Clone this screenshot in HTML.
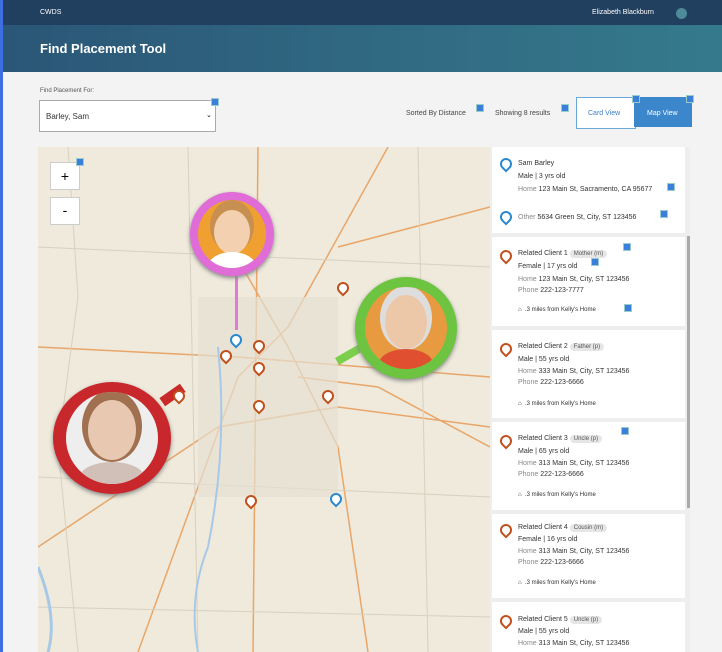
<!DOCTYPE html><html><head><style>
body{margin:0;width:722px;height:652px;overflow:hidden;background:#f3f3f3;font-family:"Liberation Sans",sans-serif;position:relative}
.top{position:absolute;left:0;top:0;width:722px;height:25px;background:#213f5e}
.hdr{position:absolute;left:0;top:25px;width:722px;height:47px;background:linear-gradient(90deg,#2b5677,#357a8c)}
.bl{position:absolute;left:0;top:0;width:3px;height:652px;background:#3d6fe0}
.t{position:absolute;white-space:nowrap}
.card{position:absolute;left:492px;width:193px;background:#fff;font-size:7px;color:#333}
.card div{position:absolute;white-space:nowrap}
.g{color:#888}
.pin{position:absolute;width:8px;height:8px;border-radius:50% 50% 50% 0;transform:rotate(-45deg);border:2px solid #c0501c;background:#fff}
.pb{border-color:#2a88d0}
.tag{background:#e6e6e6;border-radius:6px;padding:1px 4px;color:#555;font-size:6px}
.sq{position:absolute;width:6px;height:6px;background:#3a7fd9;border:1px solid #9cc}
</style></head><body>
<div class="top"></div><div class="hdr"></div><div class="bl"></div>
<div class="t" style="left:40px;top:9px;color:#fff;font-size:7px">CWDS</div>
<div class="t" style="left:592px;top:9px;color:#fff;font-size:7px">Elizabeth Blackburn</div>
<div style="position:absolute;left:676px;top:8px;width:11px;height:11px;border-radius:50%;background:#4d8a9a"></div>
<div class="t" style="left:40px;top:41px;color:#fff;font-size:13px;font-weight:bold">Find Placement Tool</div>
<div class="t" style="left:40px;top:88px;color:#555;font-size:6px">Find Placement For:</div>
<div style="position:absolute;left:39px;top:100px;width:175px;height:30px;background:#fff;border:1px solid #aaa"></div>
<div class="t" style="left:46px;top:112px;color:#333;font-size:8px">Barley, Sam</div>
<div class="t" style="left:206px;top:111px;font-size:7px">⌄</div>
<div class="t" style="left:406px;top:110px;color:#444;font-size:7px">Sorted By Distance</div>
<div class="t" style="left:495px;top:110px;color:#444;font-size:7px">Showing 8 results</div>
<div style="position:absolute;left:576px;top:97px;width:58px;height:30px;background:#fff;border:1px solid #6aa8d8"></div>
<div class="t" style="left:588px;top:110px;color:#3a7fc8;font-size:7px">Card View</div>
<div style="position:absolute;left:634px;top:97px;width:58px;height:30px;background:#3c86cc"></div>
<div class="t" style="left:647px;top:110px;color:#fff;font-size:7px">Map View</div>
<svg style="position:absolute;left:38px;top:147px" width="452" height="505">
<rect width="452" height="505" fill="#efeadb"/>
<path d="M170 60 L250 200 L300 300 L330 505 M0 200 L200 210 L452 230 M100 505 L200 230 L250 180 L350 0 M0 400 L180 280 L300 260 L452 280 M220 0 L215 505 M300 100 L452 60 M260 230 L340 240 L452 300" stroke="#e8a66a" stroke-width="1.5" fill="none"/>
<path d="M30 0 L40 150 L20 300 L40 505 M150 0 L160 505 M380 0 L390 505 M0 100 L452 120 M0 330 L452 350 M0 460 L452 470" stroke="#d8d0c0" stroke-width="1" fill="none"/>
<rect x="160" y="150" width="140" height="200" fill="#e6e0d2" opacity=".7"/>
<path d="M180 200 Q190 300 170 400 Q150 450 160 505" stroke="#a8c8e8" stroke-width="2" fill="none"/>
<path d="M0 420 Q20 470 10 505" stroke="#a8c8e8" stroke-width="3" fill="none"/>
</svg>
<div style="position:absolute;left:50px;top:162px;width:28px;height:26px;background:#fff;border:1px solid #ccc;text-align:center;font-size:14px;line-height:26px">+</div>
<div style="position:absolute;left:50px;top:197px;width:28px;height:26px;background:#fff;border:1px solid #ccc;text-align:center;font-size:14px;line-height:24px">-</div>
<div style="position:absolute;left:235px;top:270px;width:3px;height:60px;background:#e07ad8"></div>
<div style="position:absolute;left:190px;top:192px;width:84px;height:84px;border-radius:50%;background:#e06cd8;box-shadow:0 2px 4px #888"></div>
<div style="position:absolute;left:198px;top:200px;width:68px;height:68px;border-radius:50%;background:#f0a030;overflow:hidden"><div style="position:absolute;left:16px;top:10px;width:36px;height:44px;border-radius:50%;background:#f3d0b0;box-shadow:0 -6px 0 4px #c89050"></div><div style="position:absolute;left:10px;top:52px;width:48px;height:30px;border-radius:50%;background:#fff"></div></div>
<div style="position:absolute;left:335px;top:350px;width:30px;height:8px;background:#7ccf4c;transform:rotate(-30deg)"></div>
<div style="position:absolute;left:355px;top:277px;width:102px;height:102px;border-radius:50%;background:#6cc440;box-shadow:0 2px 4px #888"></div>
<div style="position:absolute;left:365px;top:287px;width:82px;height:82px;border-radius:50%;background:#e89a40;overflow:hidden"><div style="position:absolute;left:20px;top:8px;width:42px;height:54px;border-radius:50%;background:#ecc8a8;box-shadow:0 -4px 0 5px #ddd"></div><div style="position:absolute;left:14px;top:62px;width:54px;height:30px;border-radius:50%;background:#e05030"></div></div>
<div style="position:absolute;left:160px;top:390px;width:25px;height:10px;background:#c82a2a;transform:rotate(-35deg)"></div>
<div style="position:absolute;left:53px;top:382px;width:118px;height:112px;border-radius:50%;background:#c8282c;box-shadow:0 2px 4px #888"></div>
<div style="position:absolute;left:66px;top:392px;width:92px;height:92px;border-radius:50%;background:#eee;overflow:hidden"><div style="position:absolute;left:22px;top:8px;width:48px;height:60px;border-radius:50%;background:#e8c8b0;box-shadow:0 -4px 0 6px #a07050"></div><div style="position:absolute;left:14px;top:70px;width:64px;height:30px;border-radius:50%;background:#d0c0b8"></div></div>
<div class="pin" style="left:337px;top:282px"></div><div class="pin" style="left:253px;top:340px"></div><div class="pin" style="left:220px;top:350px"></div><div class="pin" style="left:253px;top:362px"></div><div class="pin" style="left:173px;top:390px"></div><div class="pin" style="left:322px;top:390px"></div><div class="pin" style="left:253px;top:400px"></div><div class="pin" style="left:245px;top:495px"></div>
<div class="pin pb" style="left:230px;top:334px"></div><div class="pin pb" style="left:330px;top:493px"></div>
<div style="position:absolute;left:490px;top:147px;width:200px;height:505px;background:#eee"></div>
<div class="card" style="top:147px;height:86px">
<div class="pin pb" style="left:8px;top:11px"></div>
<div style="left:26px;top:13px">Sam Barley</div><div style="left:26px;top:26px">Male | 3 yrs old</div>
<div style="left:26px;top:39px"><span class="g">Home</span> 123 Main St, Sacramento, CA 95677</div>
<div class="pin pb" style="left:8px;top:64px"></div><div style="left:26px;top:67px"><span class="g">Other</span> 5634 Green St, City, ST 123456</div></div>
<div class="card" style="top:237px;height:89px"><div class="pin" style="left:8px;top:13px"></div>
<div style="left:26px;top:13px">Related Client 1 <span class="tag">Mother (m)</span></div><div style="left:26px;top:26px">Female | 17 yrs old</div><div style="left:26px;top:39px"><span class="g">Home</span> 123 Main St, City, ST 123456</div><div style="left:26px;top:50px"><span class="g">Phone</span> 222-123-7777</div><div style="left:26px;top:70px;font-size:6px">⌂ &nbsp;.3 miles from Kelly's Home</div></div>
<div class="card" style="top:330px;height:88px"><div class="pin" style="left:8px;top:13px"></div>
<div style="left:26px;top:13px">Related Client 2 <span class="tag">Father (p)</span></div><div style="left:26px;top:26px">Male | 55 yrs old</div><div style="left:26px;top:38px"><span class="g">Home</span> 333 Main St, City, ST 123456</div><div style="left:26px;top:49px"><span class="g">Phone</span> 222-123-6666</div><div style="left:26px;top:71px;font-size:6px">⌂ &nbsp;.3 miles from Kelly's Home</div></div>
<div class="card" style="top:422px;height:88px"><div class="pin" style="left:8px;top:13px"></div>
<div style="left:26px;top:13px">Related Client 3 <span class="tag">Uncle (p)</span></div><div style="left:26px;top:26px">Male | 65 yrs old</div><div style="left:26px;top:38px"><span class="g">Home</span> 313 Main St, City, ST 123456</div><div style="left:26px;top:49px"><span class="g">Phone</span> 222-123-6666</div><div style="left:26px;top:70px;font-size:6px">⌂ &nbsp;.3 miles from Kelly's Home</div></div>
<div class="card" style="top:514px;height:84px"><div class="pin" style="left:8px;top:10px"></div>
<div style="left:26px;top:10px">Related Client 4 <span class="tag">Cousin (m)</span></div><div style="left:26px;top:22px">Female | 16 yrs old</div><div style="left:26px;top:34px"><span class="g">Home</span> 313 Main St, City, ST 123456</div><div style="left:26px;top:45px"><span class="g">Phone</span> 222-123-6666</div><div style="left:26px;top:66px;font-size:6px">⌂ &nbsp;.3 miles from Kelly's Home</div></div>
<div class="card" style="top:602px;height:50px"><div class="pin" style="left:8px;top:13px"></div>
<div style="left:26px;top:14px">Related Client 5 <span class="tag">Uncle (p)</span></div><div style="left:26px;top:26px">Male | 55 yrs old</div><div style="left:26px;top:38px"><span class="g">Home</span> 313 Main St, City, ST 123456</div></div>
<div style="position:absolute;left:687px;top:236px;width:3px;height:272px;background:#aaa"></div>
<div class="sq" style="left:211px;top:98px"></div><div class="sq" style="left:476px;top:104px"></div><div class="sq" style="left:561px;top:104px"></div><div class="sq" style="left:632px;top:95px"></div><div class="sq" style="left:686px;top:95px"></div><div class="sq" style="left:667px;top:183px"></div><div class="sq" style="left:660px;top:210px"></div><div class="sq" style="left:623px;top:243px"></div><div class="sq" style="left:591px;top:258px"></div><div class="sq" style="left:624px;top:304px"></div><div class="sq" style="left:621px;top:427px"></div><div class="sq" style="left:76px;top:158px"></div>
</body></html>
